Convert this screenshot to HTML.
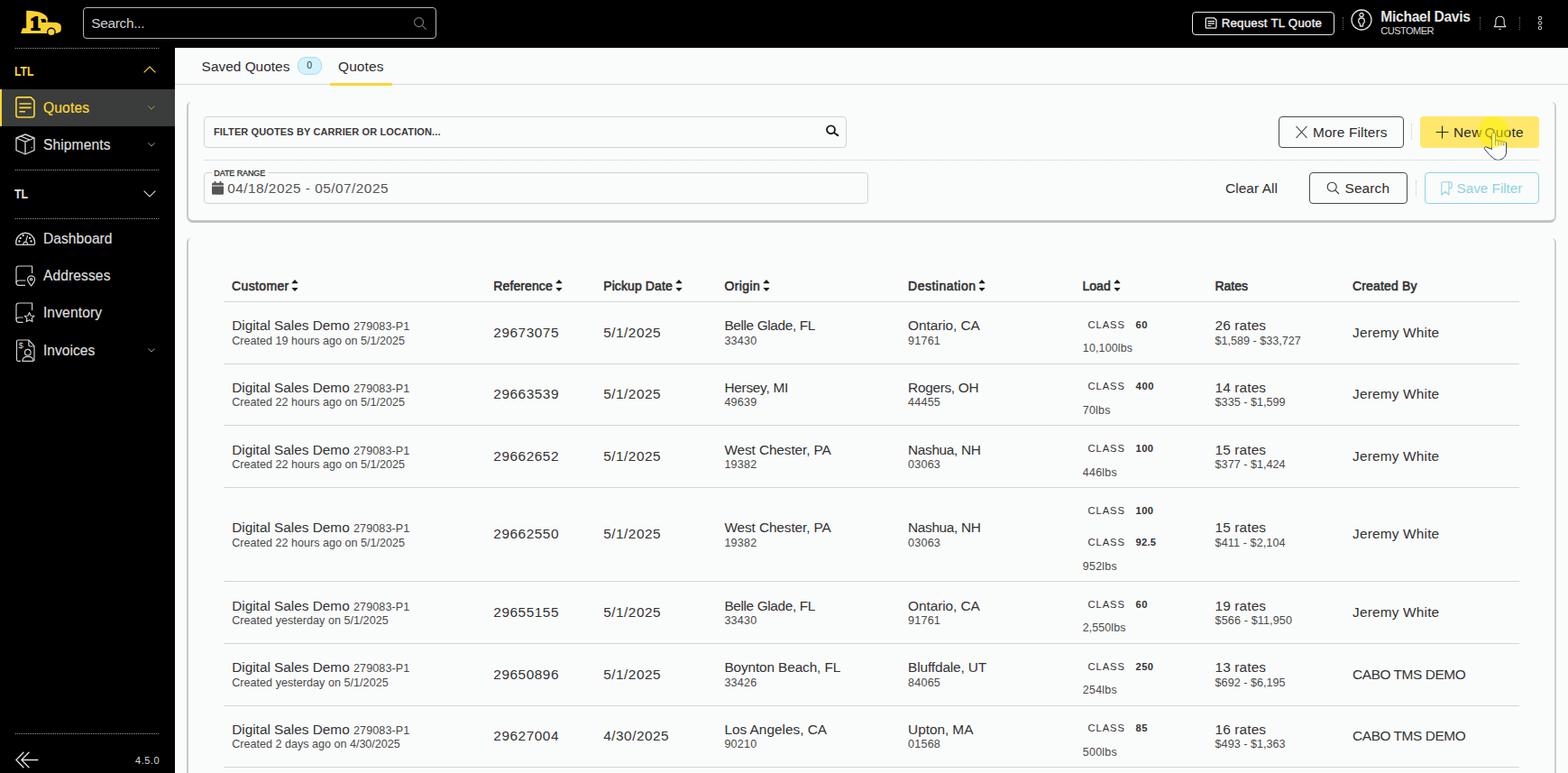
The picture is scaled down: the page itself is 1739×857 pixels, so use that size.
<!DOCTYPE html>
<html lang="en">
<head>
<meta charset="utf-8">
<title>Quotes</title>
<style>
*{box-sizing:border-box;margin:0;padding:0}
html,body{width:1739px;height:857px;overflow:hidden;background:#fafbfb;font-family:"Liberation Sans",sans-serif;color:#333}
.t{position:absolute;white-space:nowrap;line-height:1;color:#333}
.a{position:absolute}
svg{position:absolute;overflow:visible}
#topbar{position:absolute;left:0;top:0;width:1739px;height:53px;background:#000}
#sidebar{position:absolute;left:0;top:53px;width:194px;height:804px;background:#000}
.dots{position:absolute;left:17px;width:159px;height:0;border-top:1px dotted #9a9a9a}
.vd{position:absolute;height:14px;width:0;border-left:1px dotted #666}
.vdl{position:absolute;height:18px;width:0;border-left:1px dotted #ccc}
.card{position:absolute;left:207px;width:1519px;background:#fafbfb;border-style:solid;border-width:0 2px 3px 2px;border-color:transparent #cfcfcf #c3c3c3 #c8c8c8;border-radius:5px 5px 7px 7px}
.btn{position:absolute;border:1px solid #4a4a4a;border-radius:4px;background:#fafbfb}
.inp{position:absolute;border:1px solid #d2d2d2;border-radius:4px;background:#fafbfb}
.hl{position:absolute;left:248px;width:1437px;height:1px;background:#d4d4d4}
</style>
</head>
<body>
<header id="topbar">
<svg style="left:0;top:0" width="90" height="53" viewBox="0 0 90 53">
<path fill="#fcd22f" d="M29.2 12.6 Q29.2 11.8 30 11.8 C36 11.8 42 12.6 46.9 14.8 C50 16.2 52.2 18.2 53 20.8 L52.5 24.4 L62.5 24.9 C65.4 25.2 67.2 26.4 67.7 28.6 L67.8 33 C67.6 34.6 66.8 35.4 65.6 35.9 L62 36.9 L23.1 36.9 L25 31.2 L29.2 31.2 Z"/>
<circle cx="56.9" cy="35.5" r="4.9" fill="#000"/>
<circle cx="56.9" cy="35.5" r="3.6" fill="#fcd22f"/>
<path fill="#000" d="M45.3 20.9 L50.2 20.9 L51.5 24.7 L46.4 25 Z"/>
<text x="33.6" y="32.7" font-family="Liberation Serif, serif" font-weight="bold" font-size="22" fill="#000" stroke="#000" stroke-width="2" textLength="11.4" lengthAdjust="spacingAndGlyphs">1</text>
</svg>
<div class="a" style="left:92px;top:8px;width:392px;height:35px;border:1px solid #b4b4b4;border-radius:4px"></div>
<div class="t" style="left:101.3px;top:17.81px;font-size:15.4px;color:#cfcfcf;letter-spacing:-0.30px;">Search...</div>
<svg style="left:458px;top:18px" width="16" height="16" viewBox="0 0 16 16" fill="none" stroke="#777" stroke-width="1.1"><circle cx="6.6" cy="6.6" r="5"/><path d="M10.3 10.3 L14.6 14.6"/></svg>
<div class="a" style="left:1322px;top:13px;width:158px;height:26px;border:1px solid #e8e8e8;border-radius:4px"></div>
<svg style="left:1336px;top:19px" width="14" height="13" viewBox="0 0 14 13" fill="none" stroke="#f0f0f0" stroke-width="1.3"><path d="M2.6 .9 H10.6 L12.9 3 V11 Q12.9 12.2 11.7 12.2 H2.6 Q1.3 12.2 1.3 11 V2.1 Q1.3 .9 2.6 .9 Z" stroke-linejoin="round"/><path d="M3.4 4.6 H11 M3.4 7.1 H11 M3.4 9.5 H7.4" stroke-width="1.2"/></svg>
<div class="t" style="left:1354.7px;top:19.00px;font-size:13.2px;color:#f0f0f0;letter-spacing:0.28px;-webkit-text-stroke:.4px #f0f0f0;">Request TL Quote</div>
<div class="vd" style="left:1489px;top:19px"></div>
<svg style="left:1498.4px;top:10.2px" width="24" height="24" viewBox="0 0 24 24" fill="none" stroke="#ddd" stroke-width="1.3"><circle cx="12" cy="12" r="11"/><circle cx="12" cy="6.6" r="2.1"/><path d="M12 10 C9.6 10 8.6 11.8 8.6 13.6 C8.6 15 9.4 15.6 10.2 16.2 L10.6 19 H13.4 L13.8 16.2 C14.6 15.6 15.4 15 15.4 13.6 C15.4 11.8 14.4 10 12 10 Z"/></svg>
<div class="t" style="left:1531.3px;top:11.01px;font-size:15.6px;color:#e6e6e6;font-weight:bold;letter-spacing:-0.29px;">Michael Davis</div>
<div class="t" style="left:1531.3px;top:29.01px;font-size:11.1px;color:#dcdcdc;letter-spacing:-0.58px;">CUSTOMER</div>
<div class="vd" style="left:1641px;top:19px"></div>
<svg style="left:1656px;top:17px" width="15" height="17" viewBox="0 0 15 17" fill="none" stroke="#ddd" stroke-width="1.1"><path d="M7.5 1.2 C4.5 1.2 2.8 3.4 2.8 6.2 V10 L1.2 12.6 H13.8 L12.2 10 V6.2 C12.2 3.4 10.5 1.2 7.5 1.2 Z" stroke-linejoin="round"/><path d="M6.3 15.4 H8.7"/></svg>
<div class="vd" style="left:1685px;top:19px"></div>
<svg style="left:1704px;top:17px" width="8" height="17" viewBox="0 0 8 17" fill="none" stroke="#ddd" stroke-width="1"><circle cx="4" cy="3" r="1.8"/><circle cx="4" cy="8.5" r="1.8"/><circle cx="4" cy="14" r="1.8"/></svg>
</header>
<nav id="sidebar">
<div class="dots" style="top:0"></div>
<div class="dots" style="top:135px"></div>
<div class="dots" style="top:189px"></div>
<div class="dots" style="top:760px"></div>
<div class="a" style="left:0;top:46px;width:194px;height:41px;background:#3a3d3c"></div><div class="a" style="left:0;top:46px;width:1.5px;height:41px;background:#fcd535"></div>
</nav>
<nav id="navitems">
<div class="t" style="left:16.4px;top:72.01px;font-size:14px;color:#fcd535;font-weight:bold;transform:scaleX(0.877);transform-origin:0 0;">LTL</div>
<svg style="left:159px;top:73px" width="14" height="8" viewBox="0 0 14 8" fill="none" stroke="#fcd535" stroke-width="1.2"><path d="M.6 7.4 L7 1 L13.4 7.4"/></svg>
<svg style="left:17px;top:107px" width="22" height="24" viewBox="0 0 22 24" fill="none" stroke="#fcd535" stroke-width="1.6" stroke-linejoin="round"><path d="M3.2 .9 H17.2 L21 4.6 V20.6 Q21 23 18.6 23 H3.2 Q.9 23 .9 20.6 V3.2 Q.9 .9 3.2 .9 Z"/><path d="M4.4 8 H17.6 M4.4 12.4 H17.6 M4.4 16.8 H11"/></svg>
<div class="t" style="left:47.9px;top:112.01px;font-size:15.6px;color:#fcd535;letter-spacing:0.20px;-webkit-text-stroke:.2px #fcd535;">Quotes</div>
<svg style="left:164px;top:117px" width="8" height="5" viewBox="0 0 8 5" fill="none" stroke="#b99f2e" stroke-width="1"><path d="M.4 .5 L4 4.1 L7.6 .5"/></svg>
<svg style="left:17px;top:148px" width="22" height="24" viewBox="0 0 22 24" fill="none" stroke="#d0d0d0" stroke-width="1.35" stroke-linejoin="round"><path d="M11 1 L21 5 V18.6 L11 23 L1 18.6 V5 Z"/><path d="M1 5 L11 9.2 L21 5 M11 9.2 V23 M5.8 3 L16 7.2"/><path d="M17.6 16 L18.8 15.5"/></svg>
<div class="t" style="left:47.9px;top:153.01px;font-size:15.6px;color:#dcdcdc;letter-spacing:0.11px;-webkit-text-stroke:.2px #dcdcdc;">Shipments</div>
<svg style="left:164px;top:158px" width="8" height="5" viewBox="0 0 8 5" fill="none" stroke="#9a9a9a" stroke-width="1"><path d="M.4 .5 L4 4.1 L7.6 .5"/></svg>
<div class="t" style="left:16.4px;top:208.40px;font-size:14px;color:#e0e0e0;font-weight:bold;transform:scaleX(0.888);transform-origin:0 0;">TL</div>
<svg style="left:159px;top:211px" width="14" height="8" viewBox="0 0 14 8" fill="none" stroke="#cfcfcf" stroke-width="1.2"><path d="M.6 .6 L7 7 L13.4 .6"/></svg>
<svg style="left:17px;top:254px" width="23" height="19" viewBox="0 0 23 19" fill="none" stroke="#d0d0d0" stroke-width="1.4" stroke-linejoin="round"><path d="M.8 13.6 A10.4 10.4 0 0 1 21.5 13.6 V16 Q21.5 17.4 20.1 17.4 H2.2 Q.8 17.4 .8 16 Z"/><path d="M13.6 7.1 L11.7 13.6 M8.4 17.2 L9.8 14.4 H12.6 L14 17.2" stroke-width="1.2"/><g fill="#e4e4e4" stroke="none"><circle cx="8.7" cy="7.1" r="1.15"/><circle cx="5.7" cy="9.9" r="1.15"/><circle cx="4.4" cy="13.5" r="1.15"/><circle cx="16.1" cy="9.9" r="1.15"/><circle cx="17.5" cy="13.5" r="1.15"/></g></svg>
<div class="t" style="left:47.9px;top:257.01px;font-size:15.6px;color:#dcdcdc;letter-spacing:0.04px;-webkit-text-stroke:.2px #dcdcdc;">Dashboard</div>
<svg style="left:17px;top:294px" width="23" height="24" viewBox="0 0 23 24" fill="none" stroke="#d0d0d0" stroke-width="1.2" stroke-linejoin="round"><path d="M18.6 9 V1 H4 Q1 1 1 4 V19.6 Q1 22.4 4 22.4 H11"/><path d="M1 19.4 Q1 17 4 17 H11.4"/><path d="M17.6 23 C15.4 20 13.6 18.2 13.6 15.8 A4 4 0 0 1 21.6 15.8 C21.6 18.2 19.8 20 17.6 23 Z"/><circle cx="17.6" cy="15.8" r="1.2"/></svg>
<div class="t" style="left:47.9px;top:298.01px;font-size:15.6px;color:#dcdcdc;letter-spacing:0.11px;-webkit-text-stroke:.2px #dcdcdc;">Addresses</div>
<svg style="left:17px;top:335px" width="23" height="24" viewBox="0 0 23 24" fill="none" stroke="#d0d0d0" stroke-width="1.2" stroke-linejoin="round"><path d="M18.6 9 V1 H4 Q1 1 1 4 V19.6 Q1 22.4 4 22.4 H8.6"/><path d="M1 19.4 Q1 17 4 17 H8.6"/><path d="M15.6 11.6 L17.2 15 L21 15.4 L18.2 17.9 L19 21.6 L15.6 19.7 L12.2 21.6 L13 17.9 L10.2 15.4 L14 15 Z"/></svg>
<div class="t" style="left:47.9px;top:339.01px;font-size:15.6px;color:#dcdcdc;letter-spacing:0.14px;-webkit-text-stroke:.2px #dcdcdc;">Inventory</div>
<svg style="left:17px;top:376px" width="23" height="26" viewBox="0 0 23 26" fill="none" stroke="#d0d0d0" stroke-width="1.2" stroke-linejoin="round"><path d="M6 24.3 H3 Q1.5 24.3 1.5 22.8 V2.5 Q1.5 1 3 1 H14.9 L21 7.6 V24"/><path d="M14.9 1 V6.6 Q14.9 8 16.3 8 H21"/><circle cx="13.8" cy="14.7" r="3.3"/><path d="M7.9 24.3 C7.9 21 10.5 19.3 13.9 19.3 C17.3 19.3 20 21 20 24.3 Z"/></svg>
<div class="t" style="left:20.6px;top:378.41px;font-size:9.6px;color:#d8d8d8;">$</div>
<div class="t" style="left:47.9px;top:381.01px;font-size:15.6px;color:#dcdcdc;letter-spacing:0.03px;-webkit-text-stroke:.2px #dcdcdc;">Invoices</div>
<svg style="left:164px;top:386px" width="8" height="5" viewBox="0 0 8 5" fill="none" stroke="#9a9a9a" stroke-width="1"><path d="M.4 .5 L4 4.1 L7.6 .5"/></svg>
<svg style="left:17px;top:833px" width="26" height="19" viewBox="0 0 26 19" fill="none" stroke="#e0e0e0" stroke-width="1.3"><path d="M9.4 .8 L.9 9.5 L9.4 18.2 M15.4 .8 L6.9 9.5 L15.4 18.2 M7.4 9.5 H25.4"/></svg>
<div class="t" style="left:150.0px;top:838.00px;font-size:11px;color:#d8d8d8;letter-spacing:0.51px;">4.5.0</div>
</nav>
<main id="main">
<div class="a" style="left:194px;top:93px;width:1545px;height:1px;background:#d9d9d9"></div>
<div class="a" style="left:366px;top:92px;width:69px;height:3px;background:#fcd535"></div>
<div class="t" style="left:223.6px;top:66.01px;font-size:15.4px;color:#2e2e2e;letter-spacing:0.02px;">Saved Quotes</div>
<div class="a" style="left:330px;top:63px;width:27px;height:20px;border-radius:9px;background:#d2f3fc;border:1px solid #a9dbf2"></div>
<div class="t" style="left:340.2px;top:67.31px;font-size:10.5px;">0</div>
<div class="t" style="left:375.0px;top:66.01px;font-size:15.4px;color:#2e2e2e;letter-spacing:0.17px;">Quotes</div>
<section id="filters">
<div class="card" style="top:113px;height:134px"></div>
<div class="inp" style="left:226px;top:129px;width:713px;height:35px"></div>
<div class="t" style="left:237.0px;top:141.21px;font-size:11px;color:#3a3a3a;font-weight:bold;letter-spacing:0.12px;">FILTER QUOTES BY CARRIER OR LOCATION...</div>
<svg style="left:916px;top:138px" width="15" height="14" viewBox="0 0 15 14" fill="none" stroke="#1c1c1c" stroke-width="1.9"><circle cx="5.5" cy="5.8" r="4.45"/><path d="M8.8 9 L13.3 12.2" stroke-linecap="round" stroke-width="2.1"/></svg>
<div class="btn" style="left:1418px;top:129px;width:139px;height:35px"></div>
<svg style="left:1436px;top:139px" width="15" height="15" viewBox="0 0 15 15" fill="none" stroke="#333" stroke-width="1.1"><path d="M1.5 1 L13.5 14 M13.5 1 L1.5 14"/></svg>
<div class="t" style="left:1456.0px;top:139.01px;font-size:15.4px;color:#2e2e2e;letter-spacing:0.11px;">More Filters</div>
<div class="vdl" style="left:1565px;top:137px"></div>
<div class="a" style="left:1575px;top:129px;width:132px;height:35px;border-radius:4px;background:#ffe76c"></div>
<svg style="left:1592px;top:139px" width="15" height="15" viewBox="0 0 15 15" fill="none" stroke="#2a2a2a" stroke-width="1.1"><path d="M7.5 .5 V14.5 M.5 7.5 H14.5"/></svg>
<div class="t" style="left:1612.0px;top:139.01px;font-size:15.4px;color:#2a2a2a;letter-spacing:0.25px;word-spacing:-1.5px;">New Quote</div>
<svg style="left:1640px;top:140px" width="34" height="40" viewBox="0 0 34 40"><path d="M14.4 25.4 L14.4 9 C14.4 6.4 18.6 6.4 18.6 9 L18.6 16.5 C18.8 15.2 21.6 15.2 21.8 16.6 C22 15.6 24.6 15.6 24.8 17 C25 16.2 27.6 16.4 27.8 17.8 C28.4 17 30.6 17.2 30.6 19 L30.6 28 C30.6 33 27 37.4 21.4 37.4 C17 37.4 13 33 6.6 25.4 C5.6 24.2 7 22.4 8.4 22.9 Z" fill="#fbfcfc" stroke="#262a52" stroke-width=".95" stroke-linejoin="round"/><path d="M18.6 16.5 V21.4 M21.8 16.6 V21.4 M24.8 17 V21.4 M27.8 17.8 V21.4" stroke="#262a52" stroke-width=".8" fill="none"/></svg>
<div class="a" style="left:1575px;top:129px;width:132px;height:35px;border-radius:4px;overflow:hidden"><div class="a" style="left:63.6px;top:0;width:35px;height:35px;border-radius:50%;background:rgba(255,243,0,.56)"></div></div>
<div class="a" style="left:226px;top:177px;width:1481px;height:0;border-top:1px dotted #c8c8c8"></div>
<div class="inp" style="left:226px;top:191px;width:737px;height:35px"></div>
<div class="a" style="left:235px;top:186px;width:62px;height:10px;background:#fafbfb"></div>
<div class="t" style="left:237.3px;top:188.01px;font-size:9px;letter-spacing:-0.10px;-webkit-text-stroke:.3px #333;">DATE RANGE</div>
<svg style="left:235px;top:201px" width="13" height="15" viewBox="0 0 13 15" fill="#555"><path d="M2.6 0 H4.4 V1.8 H8.6 V0 H10.4 V1.8 H11.6 Q13 1.8 13 3.2 V4.6 H0 V3.2 Q0 1.8 1.4 1.8 H2.6 Z M0 5.6 H13 V13.4 Q13 14.8 11.6 14.8 H1.4 Q0 14.8 0 13.4 Z"/></svg>
<div class="t" style="left:252.2px;top:201.01px;font-size:15.4px;color:#555;letter-spacing:0.48px;">04/18/2025 - 05/07/2025</div>
<div class="t" style="left:1359.0px;top:201.01px;font-size:15.4px;color:#2e2e2e;letter-spacing:0.09px;">Clear All</div>
<div class="btn" style="left:1452px;top:191px;width:109px;height:35px"></div>
<svg style="left:1471px;top:201px" width="15" height="15" viewBox="0 0 15 15" fill="none" stroke="#333" stroke-width="1.1"><circle cx="6.2" cy="6.2" r="5"/><path d="M9.8 9.8 L14 14"/></svg>
<div class="t" style="left:1491.5px;top:201.01px;font-size:15.4px;color:#2e2e2e;letter-spacing:0.15px;">Search</div>
<div class="vdl" style="left:1570px;top:200px"></div>
<div class="btn" style="left:1580px;top:191px;width:127px;height:35px;border-color:#8fd6e2"></div>
<svg style="left:1598px;top:201px" width="13" height="16" viewBox="0 0 13 16" fill="none" stroke="#8fd3df" stroke-width="1.1" stroke-linejoin="round"><path d="M.8 15 V2 Q.8 .8 2 .8 H10.6 Q12.2 .8 12.2 2.4 V6 Q12.2 7.4 10.8 7.4 H9 V15 L4.9 11.4 Z M9 7.4 V2.4 Q9 .8 10.6 .8"/></svg>
<div class="t" style="left:1615.5px;top:201.01px;font-size:15.4px;color:#8fd3df;letter-spacing:-0.06px;">Save Filter</div>
</section>
<section id="quotes-table">
<div class="card" style="top:264px;height:620px"></div>
<div class="thead">
<div class="t" style="left:257.0px;top:310.01px;font-size:14px;color:#2f2f2f;letter-spacing:0.37px;-webkit-text-stroke:.55px #2f2f2f;">Customer</div>
<svg style="left:323.2px;top:310px" width="8" height="13" viewBox="0 0 8 13" fill="#1e1e1e"><path d="M4 .1 L7.3 3.5 Q7.7 4.2 6.9 4.2 H1.1 Q.3 4.2 .7 3.5 Z M4 13 L7.3 9.6 Q7.7 8.9 6.9 8.9 H1.1 Q.3 8.9 .7 9.6 Z"/></svg>
<div class="t" style="left:547.3px;top:310.01px;font-size:14px;color:#2f2f2f;letter-spacing:0.11px;-webkit-text-stroke:.55px #2f2f2f;">Reference</div>
<svg style="left:615.7px;top:310px" width="8" height="13" viewBox="0 0 8 13" fill="#1e1e1e"><path d="M4 .1 L7.3 3.5 Q7.7 4.2 6.9 4.2 H1.1 Q.3 4.2 .7 3.5 Z M4 13 L7.3 9.6 Q7.7 8.9 6.9 8.9 H1.1 Q.3 8.9 .7 9.6 Z"/></svg>
<div class="t" style="left:669.2px;top:310.01px;font-size:14px;color:#2f2f2f;letter-spacing:0.10px;-webkit-text-stroke:.55px #2f2f2f;">Pickup Date</div>
<svg style="left:748.6px;top:310px" width="8" height="13" viewBox="0 0 8 13" fill="#1e1e1e"><path d="M4 .1 L7.3 3.5 Q7.7 4.2 6.9 4.2 H1.1 Q.3 4.2 .7 3.5 Z M4 13 L7.3 9.6 Q7.7 8.9 6.9 8.9 H1.1 Q.3 8.9 .7 9.6 Z"/></svg>
<div class="t" style="left:803.4px;top:310.01px;font-size:14px;color:#2f2f2f;letter-spacing:0.39px;-webkit-text-stroke:.55px #2f2f2f;">Origin</div>
<svg style="left:845.6px;top:310px" width="8" height="13" viewBox="0 0 8 13" fill="#1e1e1e"><path d="M4 .1 L7.3 3.5 Q7.7 4.2 6.9 4.2 H1.1 Q.3 4.2 .7 3.5 Z M4 13 L7.3 9.6 Q7.7 8.9 6.9 8.9 H1.1 Q.3 8.9 .7 9.6 Z"/></svg>
<div class="t" style="left:1007.1px;top:310.01px;font-size:14px;color:#2f2f2f;letter-spacing:0.49px;-webkit-text-stroke:.55px #2f2f2f;">Destination</div>
<svg style="left:1084.9px;top:310px" width="8" height="13" viewBox="0 0 8 13" fill="#1e1e1e"><path d="M4 .1 L7.3 3.5 Q7.7 4.2 6.9 4.2 H1.1 Q.3 4.2 .7 3.5 Z M4 13 L7.3 9.6 Q7.7 8.9 6.9 8.9 H1.1 Q.3 8.9 .7 9.6 Z"/></svg>
<div class="t" style="left:1200.4px;top:310.01px;font-size:14px;color:#2f2f2f;letter-spacing:0.08px;-webkit-text-stroke:.55px #2f2f2f;">Load</div>
<svg style="left:1234.7px;top:310px" width="8" height="13" viewBox="0 0 8 13" fill="#1e1e1e"><path d="M4 .1 L7.3 3.5 Q7.7 4.2 6.9 4.2 H1.1 Q.3 4.2 .7 3.5 Z M4 13 L7.3 9.6 Q7.7 8.9 6.9 8.9 H1.1 Q.3 8.9 .7 9.6 Z"/></svg>
<div class="t" style="left:1347.5px;top:310.01px;font-size:14px;color:#2f2f2f;letter-spacing:-0.02px;-webkit-text-stroke:.55px #2f2f2f;">Rates</div>
<div class="t" style="left:1500.0px;top:310.01px;font-size:14px;color:#2f2f2f;letter-spacing:0.16px;-webkit-text-stroke:.55px #2f2f2f;">Created By</div>
</div>
<div class="hl" style="top:334px"></div>
<div class="row">
<div class="t" style="left:257.2px;top:353.01px;font-size:15.4px;letter-spacing:-0.02px;">Digital Sales Demo</div>
<div class="t" style="left:392.0px;top:356.01px;font-size:12.6px;color:#4a4a4a;letter-spacing:0.08px;">279083-P1</div>
<div class="t" style="left:257.2px;top:372.01px;font-size:12.6px;color:#4a4a4a;letter-spacing:0.00px;">Created 19 hours ago on 5/1/2025</div>
<div class="t" style="left:547.3px;top:361.01px;font-size:15.4px;letter-spacing:0.53px;">29673075</div>
<div class="t" style="left:669.2px;top:361.01px;font-size:15.4px;letter-spacing:0.50px;">5/1/2025</div>
<div class="t" style="left:803.4px;top:353.01px;font-size:15.4px;letter-spacing:-0.37px;">Belle Glade, FL</div>
<div class="t" style="left:803.4px;top:372.01px;font-size:12.6px;color:#4a4a4a;letter-spacing:0.19px;">33430</div>
<div class="t" style="left:1007.1px;top:353.01px;font-size:15.4px;letter-spacing:-0.08px;">Ontario, CA</div>
<div class="t" style="left:1007.1px;top:372.01px;font-size:12.6px;color:#4a4a4a;letter-spacing:0.19px;">91761</div>
<div class="t" style="left:1206.5px;top:355.00px;font-size:11.2px;letter-spacing:0.95px;">CLASS</div>
<div class="t" style="left:1259.6px;top:355.00px;font-size:11.2px;font-weight:bold;letter-spacing:0.55px;">60</div>
<div class="t" style="left:1200.8px;top:380.00px;font-size:12.4px;color:#4a4a4a;letter-spacing:0.19px;">10,100lbs</div>
<div class="t" style="left:1347.6px;top:353.01px;font-size:15.4px;letter-spacing:0.12px;">26 rates</div>
<div class="t" style="left:1347.6px;top:372.01px;font-size:12.6px;color:#4a4a4a;letter-spacing:0.00px;">$1,589 - $33,727</div>
<div class="t" style="left:1500.1px;top:361.01px;font-size:15.4px;letter-spacing:0.18px;">Jeremy White</div>
</div>
<div class="hl" style="top:403px"></div>
<div class="row">
<div class="t" style="left:257.2px;top:422.01px;font-size:15.4px;letter-spacing:-0.02px;">Digital Sales Demo</div>
<div class="t" style="left:392.0px;top:425.01px;font-size:12.6px;color:#4a4a4a;letter-spacing:0.08px;">279083-P1</div>
<div class="t" style="left:257.2px;top:440.01px;font-size:12.6px;color:#4a4a4a;letter-spacing:0.00px;">Created 22 hours ago on 5/1/2025</div>
<div class="t" style="left:547.3px;top:429.01px;font-size:15.4px;letter-spacing:0.53px;">29663539</div>
<div class="t" style="left:669.2px;top:429.01px;font-size:15.4px;letter-spacing:0.50px;">5/1/2025</div>
<div class="t" style="left:803.4px;top:422.01px;font-size:15.4px;letter-spacing:-0.27px;">Hersey, MI</div>
<div class="t" style="left:803.4px;top:440.01px;font-size:12.6px;color:#4a4a4a;letter-spacing:0.19px;">49639</div>
<div class="t" style="left:1007.1px;top:422.01px;font-size:15.4px;letter-spacing:-0.31px;">Rogers, OH</div>
<div class="t" style="left:1007.1px;top:440.01px;font-size:12.6px;color:#4a4a4a;letter-spacing:0.19px;">44455</div>
<div class="t" style="left:1206.5px;top:423.00px;font-size:11.2px;letter-spacing:0.95px;">CLASS</div>
<div class="t" style="left:1259.6px;top:423.00px;font-size:11.2px;font-weight:bold;letter-spacing:0.56px;">400</div>
<div class="t" style="left:1200.8px;top:449.00px;font-size:12.4px;color:#4a4a4a;letter-spacing:0.24px;">70lbs</div>
<div class="t" style="left:1347.6px;top:422.01px;font-size:15.4px;letter-spacing:0.12px;">14 rates</div>
<div class="t" style="left:1347.6px;top:440.01px;font-size:12.6px;color:#4a4a4a;letter-spacing:0.02px;">$335 - $1,599</div>
<div class="t" style="left:1500.1px;top:429.01px;font-size:15.4px;letter-spacing:0.18px;">Jeremy White</div>
</div>
<div class="hl" style="top:471px"></div>
<div class="row">
<div class="t" style="left:257.2px;top:491.01px;font-size:15.4px;letter-spacing:-0.02px;">Digital Sales Demo</div>
<div class="t" style="left:392.0px;top:494.01px;font-size:12.6px;color:#4a4a4a;letter-spacing:0.08px;">279083-P1</div>
<div class="t" style="left:257.2px;top:509.01px;font-size:12.6px;color:#4a4a4a;letter-spacing:0.00px;">Created 22 hours ago on 5/1/2025</div>
<div class="t" style="left:547.3px;top:498.01px;font-size:15.4px;letter-spacing:0.53px;">29662652</div>
<div class="t" style="left:669.2px;top:498.01px;font-size:15.4px;letter-spacing:0.50px;">5/1/2025</div>
<div class="t" style="left:803.4px;top:491.01px;font-size:15.4px;letter-spacing:-0.11px;">West Chester, PA</div>
<div class="t" style="left:803.4px;top:509.01px;font-size:12.6px;color:#4a4a4a;letter-spacing:0.19px;">19382</div>
<div class="t" style="left:1007.1px;top:491.01px;font-size:15.4px;letter-spacing:-0.35px;">Nashua, NH</div>
<div class="t" style="left:1007.1px;top:509.01px;font-size:12.6px;color:#4a4a4a;letter-spacing:0.19px;">03063</div>
<div class="t" style="left:1206.5px;top:492.00px;font-size:11.2px;letter-spacing:0.95px;">CLASS</div>
<div class="t" style="left:1259.6px;top:492.00px;font-size:11.2px;font-weight:bold;letter-spacing:0.41px;">100</div>
<div class="t" style="left:1200.8px;top:518.00px;font-size:12.4px;color:#4a4a4a;letter-spacing:0.28px;">446lbs</div>
<div class="t" style="left:1347.6px;top:491.01px;font-size:15.4px;letter-spacing:0.12px;">15 rates</div>
<div class="t" style="left:1347.6px;top:509.01px;font-size:12.6px;color:#4a4a4a;letter-spacing:0.02px;">$377 - $1,424</div>
<div class="t" style="left:1500.1px;top:498.01px;font-size:15.4px;letter-spacing:0.18px;">Jeremy White</div>
</div>
<div class="hl" style="top:540px"></div>
<div class="row">
<div class="t" style="left:257.2px;top:577.01px;font-size:15.4px;letter-spacing:-0.02px;">Digital Sales Demo</div>
<div class="t" style="left:392.0px;top:580.01px;font-size:12.6px;color:#4a4a4a;letter-spacing:0.08px;">279083-P1</div>
<div class="t" style="left:257.2px;top:596.01px;font-size:12.6px;color:#4a4a4a;letter-spacing:0.00px;">Created 22 hours ago on 5/1/2025</div>
<div class="t" style="left:547.3px;top:584.01px;font-size:15.4px;letter-spacing:0.53px;">29662550</div>
<div class="t" style="left:669.2px;top:584.01px;font-size:15.4px;letter-spacing:0.50px;">5/1/2025</div>
<div class="t" style="left:803.4px;top:577.01px;font-size:15.4px;letter-spacing:-0.11px;">West Chester, PA</div>
<div class="t" style="left:803.4px;top:596.01px;font-size:12.6px;color:#4a4a4a;letter-spacing:0.19px;">19382</div>
<div class="t" style="left:1007.1px;top:577.01px;font-size:15.4px;letter-spacing:-0.35px;">Nashua, NH</div>
<div class="t" style="left:1007.1px;top:596.01px;font-size:12.6px;color:#4a4a4a;letter-spacing:0.19px;">03063</div>
<div class="t" style="left:1206.5px;top:561.00px;font-size:11.2px;letter-spacing:0.95px;">CLASS</div>
<div class="t" style="left:1259.6px;top:561.00px;font-size:11.2px;font-weight:bold;letter-spacing:0.41px;">100</div>
<div class="t" style="left:1206.5px;top:596.00px;font-size:11.2px;letter-spacing:0.95px;">CLASS</div>
<div class="t" style="left:1259.6px;top:596.00px;font-size:11.2px;font-weight:bold;letter-spacing:0.24px;">92.5</div>
<div class="t" style="left:1200.8px;top:622.00px;font-size:12.4px;color:#4a4a4a;letter-spacing:0.28px;">952lbs</div>
<div class="t" style="left:1347.6px;top:577.01px;font-size:15.4px;letter-spacing:0.12px;">15 rates</div>
<div class="t" style="left:1347.6px;top:596.01px;font-size:12.6px;color:#4a4a4a;letter-spacing:0.10px;">$411 - $2,104</div>
<div class="t" style="left:1500.1px;top:584.01px;font-size:15.4px;letter-spacing:0.18px;">Jeremy White</div>
</div>
<div class="hl" style="top:644px"></div>
<div class="row">
<div class="t" style="left:257.2px;top:664.01px;font-size:15.4px;letter-spacing:-0.02px;">Digital Sales Demo</div>
<div class="t" style="left:392.0px;top:667.01px;font-size:12.6px;color:#4a4a4a;letter-spacing:0.08px;">279083-P1</div>
<div class="t" style="left:257.2px;top:682.01px;font-size:12.6px;color:#4a4a4a;letter-spacing:0.02px;">Created yesterday on 5/1/2025</div>
<div class="t" style="left:547.3px;top:671.01px;font-size:15.4px;letter-spacing:0.53px;">29655155</div>
<div class="t" style="left:669.2px;top:671.01px;font-size:15.4px;letter-spacing:0.50px;">5/1/2025</div>
<div class="t" style="left:803.4px;top:664.01px;font-size:15.4px;letter-spacing:-0.37px;">Belle Glade, FL</div>
<div class="t" style="left:803.4px;top:682.01px;font-size:12.6px;color:#4a4a4a;letter-spacing:0.19px;">33430</div>
<div class="t" style="left:1007.1px;top:664.01px;font-size:15.4px;letter-spacing:-0.08px;">Ontario, CA</div>
<div class="t" style="left:1007.1px;top:682.01px;font-size:12.6px;color:#4a4a4a;letter-spacing:0.19px;">91761</div>
<div class="t" style="left:1206.5px;top:665.00px;font-size:11.2px;letter-spacing:0.95px;">CLASS</div>
<div class="t" style="left:1259.6px;top:665.00px;font-size:11.2px;font-weight:bold;letter-spacing:0.55px;">60</div>
<div class="t" style="left:1200.8px;top:690.00px;font-size:12.4px;color:#4a4a4a;letter-spacing:0.11px;">2,550lbs</div>
<div class="t" style="left:1347.6px;top:664.01px;font-size:15.4px;letter-spacing:0.12px;">19 rates</div>
<div class="t" style="left:1347.6px;top:682.01px;font-size:12.6px;color:#4a4a4a;letter-spacing:0.12px;">$566 - $11,950</div>
<div class="t" style="left:1500.1px;top:671.01px;font-size:15.4px;letter-spacing:0.18px;">Jeremy White</div>
</div>
<div class="hl" style="top:713px"></div>
<div class="row">
<div class="t" style="left:257.2px;top:732.01px;font-size:15.4px;letter-spacing:-0.02px;">Digital Sales Demo</div>
<div class="t" style="left:392.0px;top:735.01px;font-size:12.6px;color:#4a4a4a;letter-spacing:0.08px;">279083-P1</div>
<div class="t" style="left:257.2px;top:751.01px;font-size:12.6px;color:#4a4a4a;letter-spacing:0.02px;">Created yesterday on 5/1/2025</div>
<div class="t" style="left:547.3px;top:740.01px;font-size:15.4px;letter-spacing:0.53px;">29650896</div>
<div class="t" style="left:669.2px;top:740.01px;font-size:15.4px;letter-spacing:0.50px;">5/1/2025</div>
<div class="t" style="left:803.4px;top:732.01px;font-size:15.4px;letter-spacing:-0.13px;">Boynton Beach, FL</div>
<div class="t" style="left:803.4px;top:751.01px;font-size:12.6px;color:#4a4a4a;letter-spacing:0.19px;">33426</div>
<div class="t" style="left:1007.1px;top:732.01px;font-size:15.4px;letter-spacing:-0.13px;">Bluffdale, UT</div>
<div class="t" style="left:1007.1px;top:751.01px;font-size:12.6px;color:#4a4a4a;letter-spacing:0.19px;">84065</div>
<div class="t" style="left:1206.5px;top:734.00px;font-size:11.2px;letter-spacing:0.95px;">CLASS</div>
<div class="t" style="left:1259.6px;top:734.00px;font-size:11.2px;font-weight:bold;letter-spacing:0.41px;">250</div>
<div class="t" style="left:1200.8px;top:759.00px;font-size:12.4px;color:#4a4a4a;letter-spacing:0.28px;">254lbs</div>
<div class="t" style="left:1347.6px;top:732.01px;font-size:15.4px;letter-spacing:0.12px;">13 rates</div>
<div class="t" style="left:1347.6px;top:751.01px;font-size:12.6px;color:#4a4a4a;letter-spacing:0.02px;">$692 - $6,195</div>
<div class="t" style="left:1500.1px;top:740.01px;font-size:15.4px;letter-spacing:-0.42px;">CABO TMS DEMO</div>
</div>
<div class="hl" style="top:782px"></div>
<div class="row">
<div class="t" style="left:257.2px;top:801.01px;font-size:15.4px;letter-spacing:-0.02px;">Digital Sales Demo</div>
<div class="t" style="left:392.0px;top:804.01px;font-size:12.6px;color:#4a4a4a;letter-spacing:0.08px;">279083-P1</div>
<div class="t" style="left:257.2px;top:819.01px;font-size:12.6px;color:#4a4a4a;letter-spacing:-0.01px;">Created 2 days ago on 4/30/2025</div>
<div class="t" style="left:547.3px;top:808.01px;font-size:15.4px;letter-spacing:0.53px;">29627004</div>
<div class="t" style="left:669.2px;top:808.01px;font-size:15.4px;letter-spacing:0.50px;">4/30/2025</div>
<div class="t" style="left:803.4px;top:801.01px;font-size:15.4px;letter-spacing:-0.01px;">Los Angeles, CA</div>
<div class="t" style="left:803.4px;top:819.01px;font-size:12.6px;color:#4a4a4a;letter-spacing:0.19px;">90210</div>
<div class="t" style="left:1007.1px;top:801.01px;font-size:15.4px;letter-spacing:-0.05px;">Upton, MA</div>
<div class="t" style="left:1007.1px;top:819.01px;font-size:12.6px;color:#4a4a4a;letter-spacing:0.19px;">01568</div>
<div class="t" style="left:1206.5px;top:802.00px;font-size:11.2px;letter-spacing:0.95px;">CLASS</div>
<div class="t" style="left:1259.6px;top:802.00px;font-size:11.2px;font-weight:bold;letter-spacing:0.55px;">85</div>
<div class="t" style="left:1200.8px;top:828.00px;font-size:12.4px;color:#4a4a4a;letter-spacing:0.28px;">500lbs</div>
<div class="t" style="left:1347.6px;top:801.01px;font-size:15.4px;letter-spacing:0.12px;">16 rates</div>
<div class="t" style="left:1347.6px;top:819.01px;font-size:12.6px;color:#4a4a4a;letter-spacing:0.02px;">$493 - $1,363</div>
<div class="t" style="left:1500.1px;top:808.01px;font-size:15.4px;letter-spacing:-0.42px;">CABO TMS DEMO</div>
</div>
<div class="hl" style="top:850px"></div>
</section>
</main>
</body>
</html>
